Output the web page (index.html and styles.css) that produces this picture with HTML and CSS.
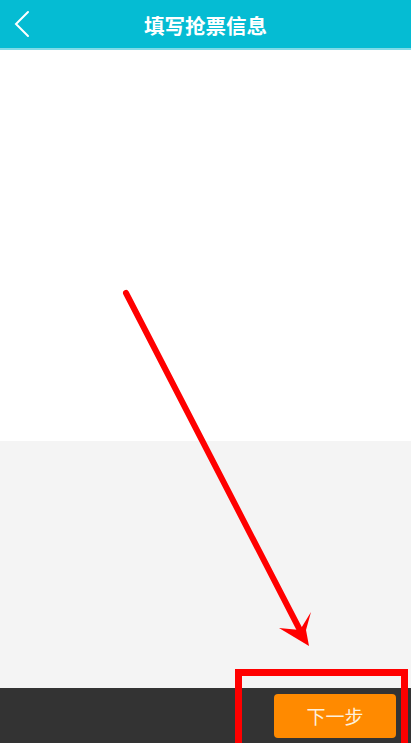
FILE: index.html
```html
<!DOCTYPE html>
<html lang="zh">
<head>
<meta charset="utf-8">
<title>填写抢票信息</title>
<link rel="stylesheet" href="styles.css">
</head>
<body>
<div class="page">
  <header class="topbar">
    <svg class="back" width="20" height="30" viewBox="0 0 20 30">
      <polyline points="14,3 2,15 14,27" fill="none" stroke="#ffffff" stroke-width="2" stroke-linejoin="miter" stroke-linecap="round"/>
    </svg>
    <h1 class="title">填写抢票信息</h1>
  </header>
  <main class="content">
    <section class="blank"></section>
    <section class="gray"></section>
  </main>
  <footer class="bottombar">
    <button class="next">下一步</button>
  </footer>
  <svg class="annot" width="411" height="743" viewBox="0 0 411 743">
    <line x1="126" y1="293" x2="303" y2="636" stroke="#ff0000" stroke-width="6" stroke-linecap="round"/>
    <polygon points="309,646 279,628 300,630 311,612 306,630" fill="#ff0000"/>
    <rect x="238.5" y="672.5" width="166" height="80" fill="none" stroke="#ff0000" stroke-width="7"/>
  </svg>
</div>
</body>
</html>
```

FILE: styles.css
```css
html, body {
  margin: 0;
  padding: 0;
  width: 411px;
  height: 743px;
  overflow: hidden;
  font-family: "Noto Sans CJK SC", "Noto Sans", sans-serif;
}
.page {
  position: relative;
  width: 411px;
  height: 743px;
  display: flex;
  flex-direction: column;
  background: #ffffff;
}
.topbar {
  height: 48px;
  flex: none;
  background: #05bcd3;
  border-bottom: 2px solid #7fdbe7;
  display: flex;
  align-items: center;
  justify-content: center;
  position: relative;
}
.back {
  position: absolute;
  left: 14px;
  top: 9px;
}
.title {
  margin: 0;
  font-size: 20.5px;
  font-weight: bold;
  color: #ffffff;
  line-height: 1;
  padding-top: 3px;
}
.content {
  flex: 1;
  display: flex;
  flex-direction: column;
}
.blank {
  height: 391px;
  background: #ffffff;
}
.gray {
  flex: 1;
  background: #f4f4f4;
}
.bottombar {
  height: 55px;
  flex: none;
  background: #333333;
  display: flex;
  justify-content: flex-end;
  align-items: center;
  padding-right: 15px;
}
.next {
  width: 122px;
  height: 44px;
  border: none;
  border-radius: 4px;
  background: #ff8a00;
  color: #fdf0dc;
  font-family: "Noto Sans CJK SC", "Noto Sans", sans-serif;
  font-size: 19px;
  padding: 0;
}
.annot {
  position: absolute;
  left: 0;
  top: 0;
  pointer-events: none;
}
```
